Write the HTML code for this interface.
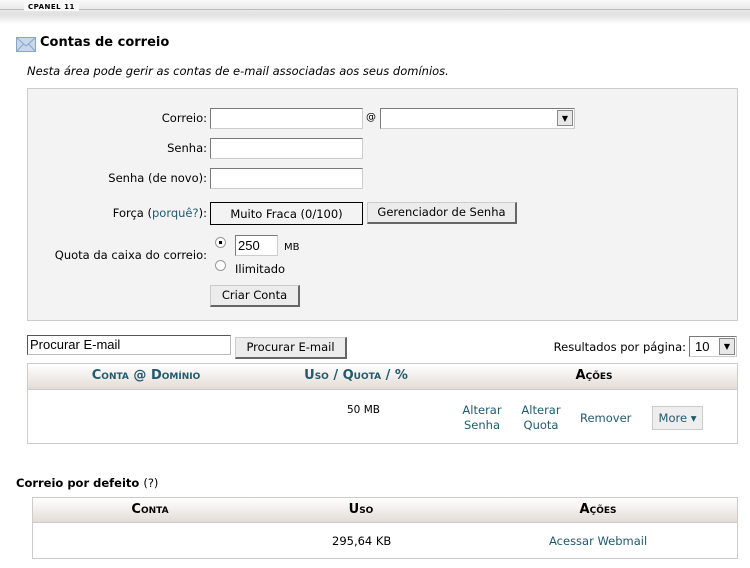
<!DOCTYPE html>
<html><head><meta charset="utf-8"><style>
*{box-sizing:border-box}
body{margin:0;width:750px;height:568px;background:#fff;font-family:"DejaVu Sans","Liberation Sans",sans-serif;font-size:11.5px;color:#000;position:relative;overflow:hidden}
.a{position:absolute;white-space:nowrap}
.inp{position:absolute;background:#fff;border:1px solid #7a7a7a;border-right-color:#ccc;border-bottom-color:#ccc}
.btn{position:absolute;background:#ececec;border:1px solid #ccc;border-right:2px solid #666;border-bottom:2px solid #666;text-align:center;font-size:11.5px}
.lnk{color:#205a6e}
.hdr{position:absolute;background:linear-gradient(#fff,#e4dcd6);border-bottom:1px solid #ccc}
.hc{position:absolute;font-weight:bold;font-variant:small-caps;font-size:13px;transform:translateX(-50%)}
</style></head><body>
<div class="a" style="left:0;top:0;width:750px;height:24px;background:linear-gradient(#fafafa,#e0e0e0 60%,#fff)"></div>
<div class="a" style="left:0;top:9px;width:750px;height:1px;background:#bbb"></div>
<div class="a" style="left:24px;top:3px;background:#f8f8f8;padding:0 4px;font-size:7px;font-weight:bold;letter-spacing:0.5px">CPANEL 11</div>
<svg class="a" style="left:16px;top:37px" width="20" height="15" viewBox="0 0 20 15"><rect x="0.5" y="0.5" width="19" height="14" fill="#c8d8ec" stroke="#8aa4c8"/><path d="M0.5 0.5L10 9L19.5 0.5M0.5 14.5L7.5 7M19.5 14.5L12.5 7" fill="none" stroke="#8aa4c8"/></svg>
<div class="a" style="left:40px;top:35px;font-size:13px;font-weight:bold">Contas de correio</div>
<div class="a" style="left:27px;top:64px;font-style:italic">Nesta área pode gerir as contas de e-mail associadas aos seus domínios.</div>

<div class="a" style="left:27px;top:88px;width:711px;height:233px;background:#f3f3f3;border:1px solid #ccc"></div>
<div class="a" style="right:543px;top:111px">Correio:</div>
<div class="inp" style="left:210px;top:108px;width:153px;height:21px"></div>
<div class="a" style="left:366px;top:112px;font-size:10px">@</div>
<div class="inp" style="left:380px;top:108px;width:195px;height:21px"></div>
<div class="a" style="left:557px;top:110px;width:16px;height:16px;background:#e8e8e8;border:1px solid #888;font-size:8px;text-align:center;line-height:15px">▼</div>
<div class="a" style="right:543px;top:141px">Senha:</div>
<div class="inp" style="left:210px;top:138px;width:153px;height:21px"></div>
<div class="a" style="right:543px;top:171px">Senha (de novo):</div>
<div class="inp" style="left:210px;top:168px;width:153px;height:21px"></div>
<div class="a" style="right:543px;top:206px">Força (<span class="lnk">porquê?</span>):</div>
<div class="a" style="left:210px;top:202px;width:153px;height:23px;border:1px solid #000;background:#f3f3f3;text-align:center;line-height:22px">Muito Fraca (0/100)</div>
<div class="btn" style="left:367px;top:202px;width:150px;height:22px;line-height:19px">Gerenciador de Senha</div>
<div class="a" style="right:543px;top:248px">Quota da caixa do correio:</div>
<div class="a" style="left:215px;top:237px;width:11px;height:11px;border-radius:50%;background:#fff;border:1px solid #999"><div style="width:3px;height:3px;background:#000;margin:3px"></div></div>
<div class="inp" style="left:235px;top:235px;width:43px;height:21px;font-size:13px;font-family:'Liberation Sans',sans-serif;padding-left:2px;line-height:19px">250</div>
<div class="a" style="left:284px;top:242px;font-size:10px">MB</div>
<div class="a" style="left:215px;top:260px;width:11px;height:11px;border-radius:50%;background:#fff;border:1px solid #999"></div>
<div class="a" style="left:235px;top:262px">Ilimitado</div>
<div class="btn" style="left:210px;top:285px;width:90px;height:22px;line-height:19px">Criar Conta</div>

<div class="inp" style="left:27px;top:335px;width:204px;height:20px;font-family:'Liberation Sans',sans-serif;font-size:13px;padding-left:2px;line-height:18px;border-color:#555 #bbb #bbb #555">Procurar E-mail</div>
<div class="btn" style="left:235px;top:337px;width:112px;height:22px;line-height:19px">Procurar E-mail</div>
<div class="a" style="right:64px;top:340px">Resultados por página:</div>
<div class="inp" style="left:689px;top:336px;width:48px;height:21px;font-family:'Liberation Sans',sans-serif;font-size:13px;padding-left:5px;line-height:19px">10</div>
<div class="a" style="left:719px;top:338px;width:16px;height:17px;background:#e8e8e8;border:1px solid #888;font-size:8px;text-align:center;line-height:16px">▼</div>

<div class="a" style="left:27px;top:363px;width:711px;height:81px;border:1px solid #ccc"></div>
<div class="hdr" style="left:28px;top:364px;width:709px;height:26px"></div>
<div class="hc lnk" style="left:146px;top:368px">Conta @ Domínio</div>
<div class="hc lnk" style="left:356px;top:368px">Uso / Quota / %</div>
<div class="hc" style="left:594px;top:368px">Ações</div>
<div class="a" style="left:347px;top:404px;font-size:10.5px">50 MB</div>
<div class="a lnk" style="left:482px;top:403px;transform:translateX(-50%);text-align:center;line-height:15px">Alterar<br>Senha</div>
<div class="a lnk" style="left:541px;top:403px;transform:translateX(-50%);text-align:center;line-height:15px">Alterar<br>Quota</div>
<div class="a lnk" style="left:580px;top:411px">Remover</div>
<div class="a lnk" style="left:652px;top:406px;width:51px;height:24px;background:#eee;border:1px solid #ccc;text-align:center;line-height:22px">More ▾</div>

<div class="a" style="left:16px;top:476px;font-weight:bold">Correio por defeito <span style="font-weight:normal">(?)</span></div>
<div class="a" style="left:32px;top:497px;width:706px;height:62px;border:1px solid #ccc"></div>
<div class="hdr" style="left:33px;top:498px;width:704px;height:25px"></div>
<div class="hc" style="left:150px;top:502px">Conta</div>
<div class="hc" style="left:361px;top:502px">Uso</div>
<div class="hc" style="left:598px;top:502px">Ações</div>
<div class="a" style="left:332px;top:534px">295,64 KB</div>
<div class="a lnk" style="left:549px;top:534px">Acessar Webmail</div>
</body></html>
